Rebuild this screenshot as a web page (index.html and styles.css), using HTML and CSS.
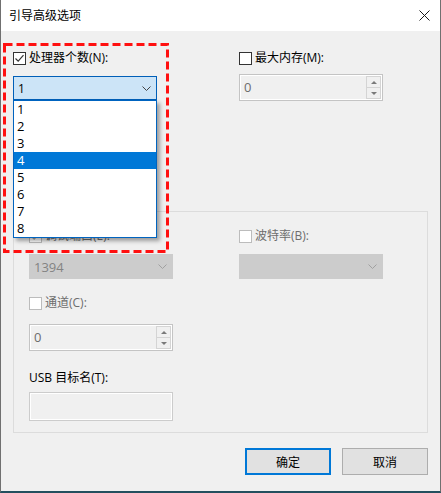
FILE: index.html
```html
<!DOCTYPE html>
<html lang="zh-CN">

<head>
  <meta charset="UTF-8" />
  <title>引导高级选项</title>
  <link rel="stylesheet" href="styles.css">
</head>

<body>
  <div class="window">
    <!-- title bar -->
    <div class="titlebar">
      <span class="title">引导高级选项</span>
      <svg class="close" width="11" height="11" viewBox="0 0 11 11">
        <path d="M0.5 0.5 L10.5 10.5 M10.5 0.5 L0.5 10.5" stroke="#1a1a1a" stroke-width="1" fill="none" />
      </svg>
    </div>

    <div class="body">
      <!-- processors / memory -->
      <div class="top">
        <div class="field">
          <label class="check-row"><span class="box checked"><svg width="11" height="11" viewBox="0 0 11 11"><path d="M1.5 5.5 L4.2 8.2 L9.5 2.2" stroke="#333" stroke-width="1.2" fill="none" /></svg></span>处理器个数(N):</label>
          <div class="combo-wrap">
            <div class="combo active">
              <span>1</span>
              <svg class="chev" width="9" height="5" viewBox="0 0 9 5"><path d="M0.5 0.5 L4.5 4.5 L8.5 0.5" stroke="#444" fill="none" /></svg>
            </div>
            <ul class="dropdown">
              <li>1</li>
              <li>2</li>
              <li>3</li>
              <li class="selected">4</li>
              <li>5</li>
              <li>6</li>
              <li>7</li>
              <li>8</li>
            </ul>
          </div>
        </div>
        <div class="field">
          <label class="check-row"><span class="box"></span>最大内存(M):</label>
          <div class="spin spin-top">
            <span class="spin-value">0</span>
            <div class="spin-btns">
              <span class="spin-btn"><i class="arrow-up"></i></span>
              <span class="spin-btn"><i class="arrow-down"></i></span>
            </div>
          </div>
        </div>
      </div>

      <!-- debug group -->
      <div class="group">
        <div class="group-grid">
          <div class="field">
            <label class="check-row disabled"><span class="box checked dis"><svg width="11" height="11" viewBox="0 0 11 11"><path d="M1.5 5.5 L4.2 8.2 L9.5 2.2" stroke="#a8a8a8" stroke-width="1.2" fill="none" /></svg></span>调试端口(E):</label>
            <div class="combo dis">
              <span>1394</span>
              <svg class="chev" width="9" height="5" viewBox="0 0 9 5"><path d="M0.5 0.5 L4.5 4.5 L8.5 0.5" stroke="#a0a0a0" fill="none" /></svg>
            </div>
          </div>
          <div class="field">
            <label class="check-row disabled"><span class="box dis"></span>波特率(B):</label>
            <div class="combo dis">
              <span></span>
              <svg class="chev" width="9" height="5" viewBox="0 0 9 5"><path d="M0.5 0.5 L4.5 4.5 L8.5 0.5" stroke="#a0a0a0" fill="none" /></svg>
            </div>
          </div>
        </div>

        <div class="field single channel">
          <label class="check-row disabled"><span class="box dis"></span>通道(C):</label>
          <div class="spin spin-channel">
            <span class="spin-value">0</span>
            <div class="spin-btns">
              <span class="spin-btn"><i class="arrow-up"></i></span>
              <span class="spin-btn"><i class="arrow-down"></i></span>
            </div>
          </div>
        </div>

        <div class="field single usb">
          <label class="plain-label">USB 目标名(T):</label>
          <div class="textbox"></div>
        </div>
      </div>

      <!-- buttons -->
      <div class="buttons">
        <button class="btn default">确定</button>
        <button class="btn">取消</button>
      </div>
    </div>

    <!-- red annotation -->
    <svg class="mark" width="441" height="493">
      <rect x="4.5" y="44.5" width="163" height="207" fill="none" stroke="#ff1010" stroke-width="3" stroke-dasharray="8 4" />
    </svg>
  </div>
</body>

</html>
```

FILE: styles.css
```css
/* page */
body {
  margin: 0;
  font-family: "Open Sans", "Noto Sans CJK SC", sans-serif;
  font-size: 12px;
  color: #000;
}

.window {
  position: relative;
  width: 441px;
  height: 493px;
  box-sizing: border-box;
  background-color: #f0f0f0;
  border-left: 1px solid #707070;
  border-right: 1px solid #707070;
  border-bottom: 2px solid #234f5e;
}

/* title bar */
.titlebar {
  height: 31px;
  background-color: #fff;
  display: flex;
  align-items: center;
  justify-content: space-between;
  padding: 0 10px 0 8px;
}

.title {
  font-size: 12px;
  line-height: 16px;
}

.close {
  display: block;
}

.body {
  padding: 0 12px;
}

/* top section */
.top {
  display: grid;
  grid-template-columns: 144px 144px;
  column-gap: 82px;
  padding-top: 19px;
}

.field {
  display: flex;
  flex-direction: column;
}

.check-row {
  display: flex;
  align-items: center;
  height: 16px;
  line-height: 16px;
  gap: 3px;
  white-space: nowrap;
}

.check-row.disabled {
  color: #6d6d6d;
}

.box {
  width: 11px;
  height: 11px;
  border: 1px solid #333;
  background-color: #fff;
  display: flex;
  align-items: center;
  justify-content: center;
}

.box.dis {
  border-color: #bcbcbc;
}

.box svg {
  display: block;
}

/* combo boxes */
.combo-wrap {
  position: relative;
  margin-top: 10px;
}

.combo {
  height: 24px;
  box-sizing: border-box;
  display: flex;
  align-items: center;
  justify-content: space-between;
  padding: 0 5px 0 4px;
  border: 1px solid #ccc;
}

.combo.active {
  background-color: #cce4f7;
  border-color: #005fb8;
}

.combo.dis {
  background-color: #cccccc;
  border-color: #cccccc;
  color: #838383;
  height: 25px;
  margin-top: 10px;
  font-size: 13px;
}

.chev {
  display: block;
}

/* opened list */
.dropdown {
  position: absolute;
  top: 100%;
  left: 0;
  width: 144px;
  box-sizing: border-box;
  margin: 0;
  padding: 0;
  list-style: none;
  background-color: #fff;
  border: 1px solid #0064c0;
  box-shadow: 3px 3px 4px rgba(0, 0, 0, 0.35);
  z-index: 5;
}

.dropdown li {
  height: 17px;
  line-height: 17px;
  padding-left: 3px;
  font-size: 13px;
}

.dropdown li.selected {
  background-color: #0078d7;
  color: #fff;
}

/* spin boxes */
.spin {
  height: 27px;
  box-sizing: border-box;
  border: 1px solid #c4c4c4;
  box-shadow: inset 0 0 0 1px #fff;
  display: flex;
  justify-content: space-between;
  color: #6d6d6d;
}

.spin-top {
  margin-top: 8px;
}

.spin-channel {
  margin-top: 13px;
}

.spin-value {
  padding: 4px 0 0 4px;
  font-size: 13px;
  line-height: 16px;
}

.spin-btns {
  display: flex;
  flex-direction: column;
  width: 15px;
  padding: 1px 1px 1px 0;
}

.spin-btn {
  flex: 1;
  border: 1px solid #d4d4d4;
  display: flex;
  align-items: center;
  justify-content: center;
}

.spin-btn + .spin-btn {
  border-top: none;
}

.arrow-up {
  width: 0;
  height: 0;
  border-left: 3px solid transparent;
  border-right: 3px solid transparent;
  border-bottom: 3px solid #7a7a7a;
}

.arrow-down {
  width: 0;
  height: 0;
  border-left: 3px solid transparent;
  border-right: 3px solid transparent;
  border-top: 3px solid #7a7a7a;
}

/* group box */
.group {
  margin-top: 110px;
  height: 222px;
  box-sizing: border-box;
  border: 1px solid #dcdcdc;
  padding: 16px 15px 0 15px;
}

.group-grid {
  display: grid;
  grid-template-columns: 144px 144px;
  column-gap: 66px;
}

.single {
  width: 144px;
}

.channel {
  margin-top: 16px;
}

.usb {
  margin-top: 19px;
}

.plain-label {
  height: 16px;
  line-height: 16px;
}

.textbox {
  margin-top: 6px;
  height: 29px;
  box-sizing: border-box;
  border: 1px solid #cccccc;
  box-shadow: inset 0 0 0 1px #fff;
}

/* buttons */
.buttons {
  display: flex;
  justify-content: flex-end;
  gap: 11px;
  margin-top: 15px;
}

.btn {
  width: 86px;
  height: 27px;
  box-sizing: border-box;
  background-color: #e1e1e1;
  border: 1px solid #adadad;
  font-family: inherit;
  font-size: 12px;
  padding: 0;
}

.btn.default {
  border: 2px solid #0078d7;
}

/* annotation overlay */
.mark {
  position: absolute;
  left: -1px;
  top: 0;
  pointer-events: none;
  z-index: 10;
}
```
